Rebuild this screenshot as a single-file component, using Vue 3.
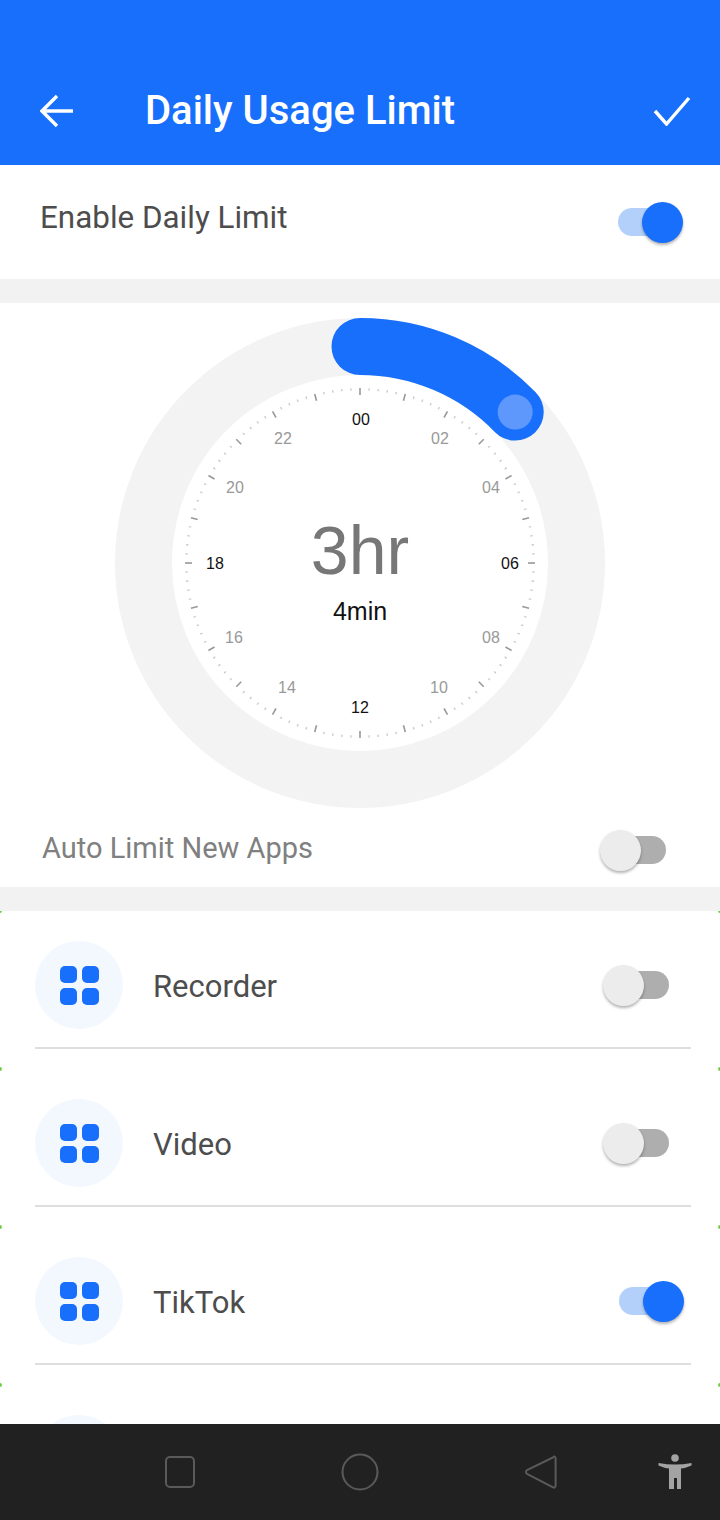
<template>
  <div class="screen">
    <header class="appbar">
      <svg class="back" width="34" height="34" viewBox="0 0 34 34">
        <path d="M33 17H3M17 2 2 17l15 15" fill="none" stroke="#fff" stroke-width="3.4" />
      </svg>
      <h1 class="title">Daily Usage Limit</h1>
      <svg class="check" width="38" height="30" viewBox="0 0 38 30">
        <path d="M2 15l11.500 13L36 2" fill="none" stroke="#fff" stroke-width="3.4" />
      </svg>
    </header>

    <section class="enable">
      <span class="enable-label">Enable Daily Limit</span>
      <div class="toggle on"><i class="knob"></i></div>
    </section>

    <section class="dial-section">
      <svg class="dial" width="720" height="510" viewBox="0 0 720 510">
        <circle cx="360" cy="260" r="216.5" fill="none" stroke="#f3f3f3" stroke-width="57" />
        <path :d="arcPath" fill="none" stroke="#176ffb" stroke-width="57" stroke-linecap="round" />
        <circle :cx="arcEnd.x" :cy="arcEnd.y" r="17.5" fill="#5e98fc" />
        <line
          v-for="t in ticks"
          :key="t.key"
          :x1="t.x1"
          :y1="t.y1"
          :x2="t.x2"
          :y2="t.y2"
          :stroke="t.color"
          :stroke-width="t.width"
        />
        <text
          v-for="h in hours"
          :key="h.label"
          :x="h.x"
          :y="h.y"
          class="hour"
          :fill="h.dark ? '#111' : '#999'"
          text-anchor="middle"
        >{{ h.label }}</text>
        <text x="360" y="271" class="big" text-anchor="middle">3hr</text>
        <text x="360" y="317" class="small" text-anchor="middle">4min</text>
      </svg>
      <div class="auto-row">
        <span class="auto-label">Auto Limit New Apps</span>
        <div class="toggle"><i class="knob"></i></div>
      </div>
    </section>

    <section class="apps">
      <i v-for="m in marks" :key="m" class="mark left" :style="{ top: m + 'px' }"></i>
      <i v-for="m in marks" :key="'r' + m" class="mark right" :style="{ top: m + 'px' }"></i>
      <div v-for="app in apps" :key="app.name" class="app">
        <div class="app-icon">
          <span></span><span></span><span></span><span></span>
        </div>
        <span class="app-name">{{ app.name }}</span>
        <div class="toggle" :class="{ on: app.on }"><i class="knob"></i></div>
      </div>
    </section>

    <footer class="navbar">
      <svg width="720" height="96" viewBox="0 0 720 96">
        <rect x="166" y="33" width="28" height="30" rx="4" fill="none" stroke="#5a5a5a" stroke-width="2" />
        <circle cx="360" cy="48" r="17.5" fill="none" stroke="#5a5a5a" stroke-width="2" />
        <path d="M553 33.500c1-1.600 2.600-1 2.600.8v27.400c0 1.800-1.600 2.400-2.600 1.600L527 50c-1.400-1-1.400-3 0-4z" fill="none" stroke="#5a5a5a" stroke-width="2" />
        <circle cx="675" cy="34" r="3.8" fill="#a3a3a3" />
        <path d="M658.500 39Q675 42 691.500 39V41.500Q686 44 681 44.500V65H677V54H674V65H669V44.500Q664 44 658.500 41.500Z" fill="#a3a3a3" />
      </svg>
    </footer>
  </div>
</template>

<script setup>
import { computed } from 'vue';

const CX = 360;
const CY = 260;
const ARC_R = 216.5;

function polar(r, deg) {
  const a = (deg * Math.PI) / 180;
  return { x: CX + r * Math.sin(a), y: CY - r * Math.cos(a) };
}

const arcEnd = polar(ARC_R, 45.8);
const arcPath = `M${CX} ${CY - ARC_R} A${ARC_R} ${ARC_R} 0 0 1 ${arcEnd.x} ${arcEnd.y}`;

// 120 ticks round the dial, every fifth one is longer
const ticks = computed(() => {
  const out = [];
  for (let i = 0; i < 120; i++) {
    const major = i % 5 === 0;
    const a = polar(175, i * 3);
    const b = polar(major ? 168 : 172.5, i * 3);
    out.push({
      key: i,
      x1: a.x,
      y1: a.y,
      x2: b.x,
      y2: b.y,
      color: major ? '#999' : '#ccc',
      width: major ? 1.6 : 1.4,
    });
  }
  return out;
});

const hours = [
  { label: '00', x: 361, y: 122, dark: true },
  { label: '02', x: 440, y: 141 },
  { label: '04', x: 491, y: 190 },
  { label: '06', x: 510, y: 266, dark: true },
  { label: '08', x: 491, y: 340 },
  { label: '10', x: 439, y: 390 },
  { label: '12', x: 360, y: 410, dark: true },
  { label: '14', x: 287, y: 390 },
  { label: '16', x: 234, y: 340 },
  { label: '18', x: 215, y: 266, dark: true },
  { label: '20', x: 235, y: 190 },
  { label: '22', x: 283, y: 141 },
];

const apps = [
  { name: 'Recorder', on: false },
  { name: 'Video', on: false },
  { name: 'TikTok', on: true },
  { name: '', on: false },
];

const marks = [0, 158, 316, 474];
</script>

<style>
html,
body {
  margin: 0;
  background: #fff;
}
</style>

<style scoped>
.screen {
  width: 720px;
  height: 1520px;
  display: flex;
  flex-direction: column;
  overflow: hidden;
  font-family: Roboto, "Liberation Sans", sans-serif;
  background: #fff;
}

.appbar {
  height: 165px;
  flex: none;
  box-sizing: border-box;
  background: #176ffb;
  display: flex;
  align-items: center;
  padding: 56px 29px 0 40px;
  color: #fff;
}
.title {
  flex: 1;
  margin: 0 0 0 71px;
  font-size: 40px;
  font-weight: 500;
  line-height: 1;
}
.check {
  flex: none;
}

.enable {
  height: 114px;
  flex: none;
  box-sizing: border-box;
  display: flex;
  align-items: flex-start;
  justify-content: space-between;
  padding: 38px 56px 0 40px;
}
.enable-label {
  font-size: 31.4px;
  line-height: 30px;
  color: #4d4d4d;
}

.dial-section {
  flex: none;
  height: 584px;
  margin-top: 24px;
  margin-bottom: 24px;
  box-shadow: 0 -24px 0 #f2f2f2, 0 24px 0 #f2f2f2;
}
.dial {
  display: block;
}
.hour {
  font-family: "Liberation Sans", sans-serif;
  font-size: 16px;
}
.big {
  font-family: "Liberation Sans", sans-serif;
  font-size: 68px;
  fill: #777;
}
.small {
  font-family: "Liberation Sans", sans-serif;
  font-size: 25px;
  fill: #111;
}

.auto-row {
  display: flex;
  align-items: center;
  justify-content: space-between;
  padding: 15px 54px 0 42px;
}
.auto-row .toggle {
  margin-top: 3px;
}
.auto-label {
  font-size: 29px;
  line-height: 40px;
  color: #808080;
}

.toggle {
  position: relative;
  width: 56px;
  height: 28px;
  border-radius: 14px;
  background: #aeaeae;
  flex: none;
}
.toggle .knob {
  position: absolute;
  left: -10px;
  top: -6px;
  width: 41px;
  height: 41px;
  border-radius: 50%;
  background: #ececec;
  box-shadow: 0 2px 3px rgba(0, 0, 0, 0.3);
}
.toggle.on {
  background: #b3d0fb;
  width: 46px;
  margin-top: 5px;
}
.toggle.on .knob {
  left: auto;
  right: -19px;
  background: #176ffb;
}

.apps {
  position: relative;
  flex: 1;
  min-height: 0;
  overflow: hidden;
}
.mark {
  position: absolute;
  width: 4px;
  height: 4px;
  margin-top: -2px;
  border-radius: 50%;
  background: #6fd04a;
}
.mark.left {
  left: -2px;
}
.mark.right {
  right: -2px;
}
.app {
  position: relative;
  height: 158px;
  box-sizing: border-box;
  margin: 0 29px 0 35px;
  padding-top: 30px;
  display: flex;
  align-items: flex-start;
}
.app::after {
  content: "";
  position: absolute;
  left: 0;
  right: 0;
  top: 136px;
  height: 2px;
  background: #dedede;
}
.app-icon {
  width: 88px;
  height: 88px;
  flex: none;
  box-sizing: border-box;
  border-radius: 50%;
  background: #f3f8ff;
  padding: 25px;
  display: grid;
  grid-template-columns: 17px 17px;
  grid-auto-rows: 17px;
  gap: 5px;
}
.app-icon span {
  border-radius: 5px;
  background: #176ffb;
}
.app-name {
  flex: 1;
  margin-left: 30px;
  font-size: 31px;
  line-height: 92px;
  color: #4d4d4d;
}
.app .toggle {
  margin: 30px 22px 0 0;
}
.app .toggle.on {
  margin-top: 30px;
  margin-right: 26px;
}

.navbar {
  height: 96px;
  flex: none;
  background: #212121;
}
.navbar svg {
  display: block;
}
</style>
